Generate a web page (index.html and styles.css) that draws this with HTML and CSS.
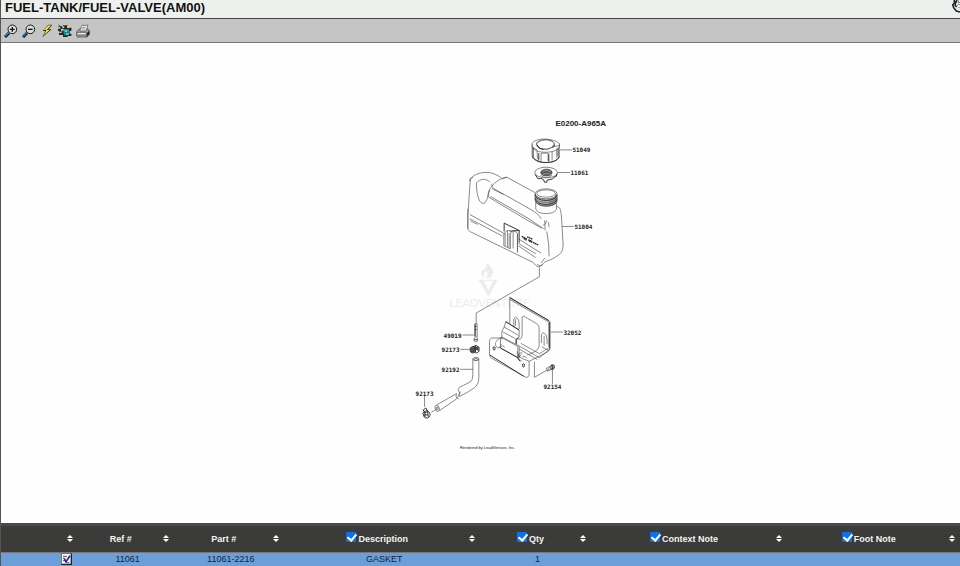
FILE: index.html
```
<!DOCTYPE html>
<html lang="en">
<head>
<meta charset="utf-8">
<title>FUEL-TANK/FUEL-VALVE(AM00)</title>
<link rel="stylesheet" href="styles.css">
</head>
<body>
<header class="title-bar">
  <h1>FUEL-TANK/FUEL-VALVE(AM00)</h1>
  <svg class="pointer" viewBox="0 0 24 39" aria-hidden="true"><path d="M8 0 5 10l-4 4 3 10 8 9 12 2V0z" fill="#f4f4f4"/><path d="M7 0v10l-5 4 3 9 8 10 11 3M10 4v13l4 4M14 0l-1 8" fill="none" stroke="#22242c" stroke-width="5"/><path d="M19 0v9l5-2M15 19c1-6 5-7 9-5M17 25c3-4 5-2 7-1" fill="none" stroke="#888" stroke-width="3"/></svg>
</header>
<nav class="toolbar" aria-label="Diagram tools">
  <button type="button" aria-label="Zoom in"><svg viewBox="0 0 42 42"><path d="m3 39 12-12" stroke="#071a45" stroke-width="9"/><path d="m4 36 9-9" stroke="#2683c8" stroke-width="4"/><circle cx="25" cy="16" r="13" fill="#d8dddd" stroke="#181818" stroke-width="3"/><path d="M18 16h14M25 9v14" stroke="#111" stroke-width="4"/></svg></button>
  <button type="button" aria-label="Zoom out"><svg viewBox="0 0 42 42"><path d="m3 39 12-12" stroke="#071a45" stroke-width="9"/><path d="m4 36 9-9" stroke="#2683c8" stroke-width="4"/><circle cx="25" cy="16" r="13" fill="#d8dddd" stroke="#181818" stroke-width="3"/><path d="M18 16h14" stroke="#111" stroke-width="4"/></svg></button>
  <button type="button" aria-label="Hotspots"><svg viewBox="0 0 42 42"><path d="M25 2h12L26 16h9L7 40l9-19H8z" fill="#303018"/><path d="M26 4h7L20 18h9L11 34l9-16h-8z" fill="#f1ed50"/></svg></button>
  <button type="button" aria-label="Assembly"><svg viewBox="0 0 42 42"><path d="M1 7h12v6h6V4h11v7h10v10h-5v8h5v7H29v3H15v-6H3v-6h8v-6H0v-7h7v-5H1z" fill="#23292a"/><path d="M15 15h18v19H18z" fill="#16878c"/><path d="M20 18h8v6h-8zM24 28h8v5h-8z" fill="#62cbd0"/><path d="M27 5h8v7h-8z" fill="#e3d655"/><path d="m2 3 8 8M3 24l10-5M33 20l8-6M16 3l5 8" stroke="#333" stroke-width="3"/><path d="M9 15h7v5H9z" fill="#ddd"/></svg></button>
  <button type="button" aria-label="Print"><svg viewBox="0 0 42 42"><path d="m2 23 8-8h26l4 5v11l-7 8H4l-2-5z" fill="#a6a6a6" stroke="#333" stroke-width="2"/><path d="m11 21 7-17h18l-6 17z" fill="#f5f5f5" stroke="#444" stroke-width="2"/><path d="m31 39 1-12 8-7v11z" fill="#222"/><path d="M3 25h28M5 33h24M19 10h10M17 15h10" stroke="#555" stroke-width="2"/><path d="M5 29h23" stroke="#fff" stroke-width="3"/></svg></button>
</nav>
<main class="viewer">
  <svg class="diagram" viewBox="0 43 960 480" role="img" aria-label="Fuel tank exploded parts diagram">
    <g class="watermark">
      <path d="M486 263q9 7 6 12-2 4-6 3 3-4-1-7-3 5 0 7-6-2-4-7 6-2 5-8zM478 280h19l-9 17zM483 281l5 10 5-10"/>
      <text x="489" y="307" text-anchor="middle">LEADVENTURE</text>
    </g>
    <!-- Tank, cap and gasket -->
    <g class="ink" transform="translate(450 110) scale(.33333)">
      <path d="M245 103v35c1 14 25 22 44 20 22 0 38-9 38-20v-37M245 103c-3-9 26-20 53-14 23 4 34 12 28 22-5 13-27 17-46 16-23-1-36-9-35-24z"/>
      <path d="M258 104c1-11 18-17 32-14 16 1 24 8 21 16-5 8-18 14-31 12-12-1-21-6-22-14zM259 99l13-7 17-3 16 5 7 8-7 10-15 6-19-2-11-9zM245 112l15 8M260 121l1 26M272 130v26M293 131v24M305 124v28M319 116v28M326 107l-15 3M272 130h21"/>
      <path class="thick" d="M248 113v31M265 130v22M295 132v22M323 115v25M260 105l7 10 12 4M306 114l7-8M246 141q14 18 43 17 29-1 38-18"/>
      <path d="M329 120h36M321 188h38M335 350h35"/>
      <ellipse cx="287" cy="188" rx="34" ry="16"/><path class="thick" d="M254 194l9 13 8-2 9 5 2 7h7l1-6 17-4 4-5 7-3 2-8"/>
      <ellipse class="solid" cx="288" cy="188" rx="17" ry="10"/><path d="M275 187q12-10 26 0M277 194q13-8 23 0" stroke="#bbb"/><path d="M270 196q18 14 35 0"/>
      <path d="M254 252v19c3 24 63 25 66 2v-18z" fill="#bbb"/>
      <ellipse cx="287" cy="252" rx="33" ry="15" fill="#fff"/><ellipse cx="287" cy="251" rx="28" ry="11"/><path class="thick" d="M254 253q2 18 33 19 31-2 33-17M254 265q3 18 33 19 31-2 33-17"/><path d="M254 259q3 18 33 19 31-2 33-17M255 271q4 17 32 17 29-1 33-15"/>
      <path d="M316 253v21M311 263v20M305 266v20M299 268v20"/>
      <path d="M256 275v22c4 12 18 15 36 14 15-1 23-6 26-13v-21M318 289l8 4c5 4 5 14 7 25l5 85c0 19-5 27-14 33-12 9-25 15-35 18-9 2-12 14-24 17-7 1-11-8-17-13L60 366l-8-7v-42l7-103c0-18 33-29 57-26 15 2 29 10 37 17M58 215v-8q6-5 9-4M52 356v-59M155 207l14-5 84 46M169 202c-16 1-37 16-46 28-8 11-11 17-10 31M124 221c-1 10 7 17 16 21l101 57q25 14 31 28M113 261l112 67 49 27M120 260l112 65 48 32M124 236l35 18M78 219c11-13 26-14 40-3M78 219c-1 20 3 45 11 56 4 6 10 8 15 3 8-9 8-25 14-37M58 314l108 60M58 327l98 52M60 333l21 11M205 388l67 42M204 401l52 31M204 408l52 36M283 331l1 31M277 347q10-3 12-15M289 365q8 41 7 75M294 337l2 15M283 445l-11 15M260 464q9 9 18 0"/>
      <path class="thick" d="M161 340l45 22v37M161 340v25M207 362l-29 2"/>
      <path d="M160 373v35l20 9v-40q0-17 13-13l8 6v59M164 373v35M176 370v44M171 363v49M201 373v52M188 366v50M160 373q9-16 20-9"/>
      <path class="letters" d="m230 381 16 7M214 380l16 8m3 2 12 5m3 3 16 8M219 386l10 5m7 2 10 5"/>
    </g>
    <!-- Hose, clamps and bracket -->
    <g class="ink" transform="translate(400 260) scale(.33333)">
      <path d="M417 23v28L227 160v32"/>
      <path d="M223 192h7v40h-7zM223 200h7M223 210h7M222 233l-2 10q7 8 12 0l-2-10M186 226h34"/>
      <path class="thick" d="M224 194v35M221 240h10"/>
      <path class="thick" d="M209 265l8-5 6 2v16l-8 2-6-5zM219 260q8-6 16 2 4 18-9 18M219 268h14M225 259v20M229 262l5 14"/>
      <path class="solid" d="M210 265l11-3v14l-9 2zM225 263h8v6h-8z"/>
      <path d="M179 269h28M179 329h39M72 408v34M92 458l14-8"/>
      <path d="M217 298v48q0 16-8 21l-32 16M235 298v56q0 20-14 31-18 13-43 25M168 402l-58 33M168 418l-51 35"/>
      <ellipse cx="226" cy="298" rx="9" ry="5"/><ellipse cx="226" cy="299" rx="5" ry="3"/>
      <ellipse cx="110" cy="446" rx="6" ry="10" transform="rotate(-20 110 446)"/><ellipse cx="110" cy="446" rx="2" ry="5"/>
      <path d="M177 383q-8 8-1 13 5 6-2 12-7 6 1 11M180 396q-9 7-2 15M168 402q-4 8 2 16"/>
      <path class="thick" d="M68 451l8-6 5 10-8 5zM67 461q9-13 19-3 7 12-5 17-11 3-14-14zM73 457v15M81 456l2 15M68 466h14"/>
      <path d="M328 113l119 71M328 119l117 68v76M328 113v78M448 184v83q-1 8-12 13l-50 25M365 172v53q0 17-15 13M365 172q1-5 10 0l34 20q7 4 7 12v56M416 260q-4 16-36 26M340 203v-26q4-9 12 0 5 6 4 31M423 250v-25q4-12 14 1 4 6 3 27M431 228v30M345 178v20"/>
      <path d="M316 186l40 25v22l-9 7v14l9 5v32M316 186l-5 16-7 13v17l-4 6v27l52 29v-34l-50-27M311 202l43 25M306 216l39 21M304 232l42 22M356 259l61 35q20-17 31-26M356 268l55 32M361 251l56 31 27-17M424 261l21 12M304 235h-31q-6 2-6 12v38q0 7 7 11l100 56q12 5 12-12v-35l-22-9q-13-5-14-20M286 247q13-18 20-9M285 249q-2 14 11 16l7-12M300 264q6-10 13-1M352 293q1-16 14-13M350 296l14 8M366 291q9-4 13 5"/>
      <path class="thick" d="M316 186l40 25M300 265l52 29M354 233l-7 6v14M268 286l102 64M361 285q-12 11-2 20M328 114l118 69M448 187v80"/>
      <ellipse class="thick" cx="281" cy="266" rx="3" ry="5"/><ellipse class="thick" cx="369" cy="317" rx="3" ry="5"/>
      <path d="M451 217h37M402 306v47l40-23M456 330v43"/>
      <path d="M438 326l17-10q9-1 6 8l-20 11zM442 325l5 9M447 322l5 9"/><path class="thick" d="M453 316q8-2 9 4 1 9-8 10l-3-5zM456 318v10"/>
    </g>
    <g class="part">
      <text class="assembly" x="555" y="126">E0200-A965A</text>
      <text x="572" y="152">51049</text>
      <text x="570" y="175">11061</text>
      <text x="574" y="229">51004</text>
      <text x="563" y="335">32052</text>
      <text x="443" y="338">49019</text>
      <text x="441" y="352">92173</text>
      <text x="441" y="372">92192</text>
      <text x="415" y="396">92173</text>
      <text x="543" y="389">92154</text>
    </g>
    <text class="credit" x="487" y="449" text-anchor="middle">Rendered by LeadVenture, Inc.</text>
  </svg>
</main>
<table class="parts">
  <colgroup><col class="c-pick"><col class="c-ref"><col class="c-part"><col class="c-desc"><col class="c-qty"><col class="c-context"><col class="c-foot"></colgroup>
  <thead>
    <tr>
      <th><div class="head"><span class="label"></span><button type="button" class="sort" aria-label="Sort by selection"></button></div></th>
      <th><div class="head"><span class="label">Ref #</span><button type="button" class="sort" aria-label="Sort by reference"></button></div></th>
      <th><div class="head"><span class="label">Part #</span><button type="button" class="sort" aria-label="Sort by part"></button></div></th>
      <th><div class="head"><label class="label"><input type="checkbox" checked>Description</label><button type="button" class="sort" aria-label="Sort by description"></button></div></th>
      <th><div class="head"><label class="label"><input type="checkbox" checked>Qty</label><button type="button" class="sort" aria-label="Sort by quantity"></button></div></th>
      <th><div class="head"><label class="label"><input type="checkbox" checked>Context Note</label><button type="button" class="sort" aria-label="Sort by context note"></button></div></th>
      <th><div class="head"><label class="label"><input type="checkbox" checked>Foot Note</label><button type="button" class="sort" aria-label="Sort by foot note"></button></div></th>
    </tr>
  </thead>
  <tbody>
    <tr>
      <td class="pick"><button type="button" aria-label="Select part"><svg viewBox="0 0 33 36"><path d="M1 1h31v34H1z" fill="#f6f6fa" stroke="#222" stroke-width="2"/><path d="M31 2v32H2" fill="none" stroke="#222" stroke-width="4"/><path d="M6 10h12M6 16h7M6 23h6M15 29h10" stroke="#555" stroke-width="3"/><path d="m10 18 5 8L27 8" fill="none" stroke="#2428a8" stroke-width="5"/></svg></button></td>
      <td>11061</td><td>11061-2216</td><td>GASKET</td><td>1</td><td></td><td></td>
    </tr>
  </tbody>
</table>
</body>
</html>
```
FILE: styles.css
```
* { box-sizing: border-box; }

body {
  margin: 0;
  height: 100vh;
  display: flex;
  flex-direction: column;
  overflow: hidden;
  border-left: 1px solid #555;
  background: #fff;
  font-family: "Liberation Sans", Arial, sans-serif;
}

button { border: 0; padding: 0; background: none; }

.title-bar {
  position: relative;
  flex: none;
  height: 19px;
  padding-left: 4px;
  background: #eef0ee;
  border-bottom: 1px solid #444;
}

.title-bar h1 {
  margin: 0;
  font-size: 13px;
  line-height: 15px;
  color: #111;
}

.pointer {
  position: absolute;
  top: 0;
  right: 0;
  width: 8px;
  height: 13px;
}

.toolbar {
  flex: none;
  display: flex;
  align-items: center;
  height: 24px;
  padding-left: 1px;
  background: #c5c5c5;
  border-bottom: 1px solid #777;
}

.toolbar button {
  display: flex;
  justify-content: center;
  width: 18px;
}

.toolbar svg { width: 14px; height: 14px; }

.viewer {
  flex: 1;
  min-height: 0;
  background: #fefefe;
}

.diagram { display: block; width: 100%; height: 100%; }

.ink {
  fill: none;
  stroke: #505050;
  stroke-width: 2;
  stroke-linejoin: round;
}

.ink .thick { stroke: #333; stroke-width: 3; }
.ink .solid { fill: #555; stroke: #333; }
.ink .letters { stroke: #222; stroke-width: 4; stroke-dasharray: 5 1; }

.part { font: bold 6px "DejaVu Sans Mono", monospace; fill: #222; }
.part .assembly { font: bold 8px "Liberation Sans", sans-serif; }
.credit { font: 4px "Liberation Sans", sans-serif; fill: #222; }

.watermark { fill: #eeebee; }
.watermark text { font: 11px "DejaVu Sans", sans-serif; }

.parts {
  flex: none;
  width: 100%;
  table-layout: fixed;
  border-collapse: collapse;
  font-size: 9px;
  line-height: 12px;
}

.c-pick { width: 8%; }
.c-ref { width: 10%; }
.c-part { width: 11.5%; }
.c-desc { width: 20.5%; }
.c-qty { width: 11.5%; }
.c-context { width: 20.5%; }
.c-foot { width: 18%; }

.parts th {
  height: 28px;
  padding: 0 0 0 4px;
  background: #3b3b39;
  border-top: 3px solid #4a4a4a;
  border-bottom: 1px solid #777;
  color: #f4f4f4;
}

.head { display: flex; align-items: center; padding-right: 2px; }

.label {
  flex: 1;
  display: flex;
  align-items: center;
  justify-content: center;
  gap: 2px;
}

.label input {
  appearance: none;
  width: 10px;
  height: 10px;
  margin: 0 0 3px;
  border-radius: 1px;
  background: #0f70e8;
}

.label input:checked::before {
  content: "";
  display: block;
  width: 4px;
  height: 7px;
  margin-left: 3px;
  border: solid #fff;
  border-width: 0 2px 2px 0;
  transform: rotate(40deg);
}

.sort {
  display: flex;
  flex-direction: column;
  align-items: center;
  gap: 1px;
  width: 12px;
}

.sort::before,
.sort::after {
  content: "";
  border: 3px solid transparent;
}

.sort::before { border-top: 0; border-bottom-color: #fff; }
.sort::after { border-bottom: 0; border-top-color: #fff; }

.parts td {
  height: 14px;
  padding: 0 0 0 4px;
  background: #6c9fd8;
  color: #14233a;
  text-align: center;
}

.parts .pick { padding-right: 6px; }
.pick button { display: block; margin-left: auto; }
.pick svg { display: block; width: 11px; height: 12px; }
```
